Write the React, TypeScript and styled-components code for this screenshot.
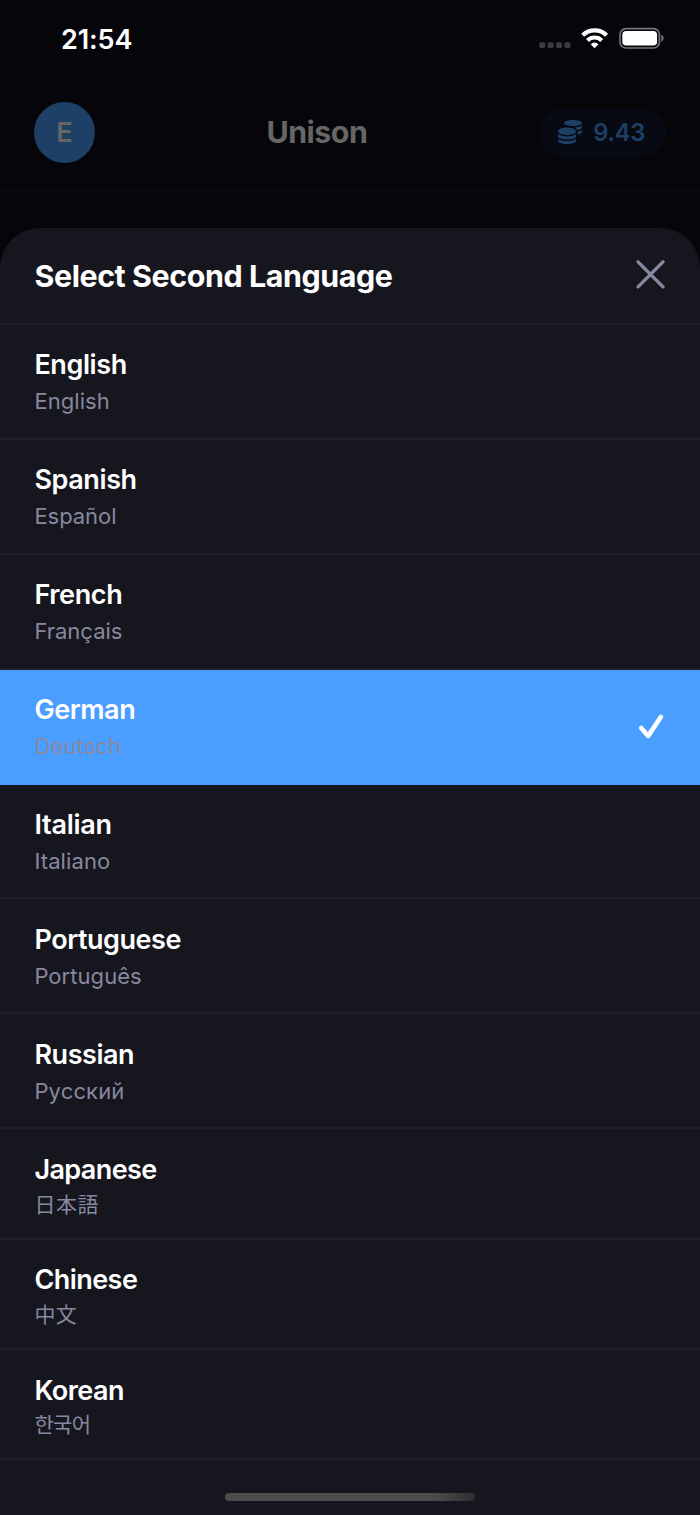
import React from "react";
import styled, { createGlobalStyle } from "styled-components";
import { FaCoins } from "react-icons/fa";

const Global = createGlobalStyle`
  *, *::before, *::after { box-sizing: border-box; }
  html, body { margin: 0; padding: 0; background: #05050a; }
  body {
    font-family: Inter, "Noto Sans CJK JP", "Noto Sans CJK KR", sans-serif;
    -webkit-font-smoothing: antialiased;
  }
`;

const Screen = styled.div`
  display: flex;
  flex-direction: column;
  width: 700px;
  height: 1515px;
  overflow: hidden;
  background: #05050a;
  position: relative;
`;

const StatusBar = styled.div`
  flex: none;
  display: flex;
  align-items: center;
  justify-content: space-between;
  height: 76px;
  padding: 0 36px 0 61px;
`;

const Clock = styled.div`
  padding-top: 3px;
  color: #fff;
  font-size: 27px;
  font-weight: 600;
  letter-spacing: -0.1px;
  line-height: 32px;
`;

const StatusIcons = styled.svg`
  display: block;
  width: 126px;
  height: 24px;
`;

const AppBar = styled.header`
  flex: none;
  display: flex;
  align-items: center;
  justify-content: space-between;
  height: 115px;
  padding: 0 34px 2px;
  border-bottom: 1px solid #0d0d14;
`;

const Avatar = styled.div`
  display: flex;
  align-items: center;
  justify-content: center;
  width: 61px;
  height: 61px;
  border-radius: 50%;
  background: #1e3f66;
  color: #666;
  font-size: 27px;
  font-weight: 600;
`;

const AppTitle = styled.h1`
  margin: 0;
  color: #666;
  font-size: 30.4px;
  font-weight: 650;
  letter-spacing: -0.5px;
`;

const Balance = styled.div`
  display: flex;
  align-items: center;
  gap: 11px;
  height: 49px;
  padding: 0 21px 0 19.5px;
  border-radius: 24px;
  background: #070a12;
  color: #1e3f66;
  font-size: 23.7px;
  font-weight: 600;
  letter-spacing: -0.3px;
`;

const Sheet = styled.section`
  flex: none;
  display: flex;
  flex-direction: column;
  height: 1287px;
  margin-top: 37px;
  border-radius: 40px 40px 0 0;
  background: #16161e;
`;

const SheetHeader = styled.div`
  flex: none;
  display: flex;
  align-items: center;
  justify-content: space-between;
  height: 97px;
  padding: 0 34px 0 34.5px;
  border-bottom: 2px solid #1e1e2c;
`;

const SheetTitle = styled.h2`
  margin: 0;
  color: #fff;
  font-size: 30.4px;
  font-weight: 660;
  letter-spacing: -0.42px;
  line-height: 36px;
`;

const CloseIcon = styled.svg`
  display: block;
  width: 30px;
  height: 30px;
  margin-bottom: 1px;
`;

const List = styled.div`
  display: flex;
  flex-direction: column;
`;

const Row = styled.div<{ $selected?: boolean; $compact?: boolean }>`
  flex: none;
  display: flex;
  align-items: center;
  justify-content: space-between;
  height: ${(p) => (p.$compact ? 110.4 : 114.9)}px;
  padding: 0 36px 0 34.4px;
  border-bottom: 2px solid ${(p) => (p.$selected ? "#4a9eff" : "#1e1e2c")};
  background: ${(p) => (p.$selected ? "#4a9eff" : "transparent")};
`;

const Labels = styled.div<{ $compact?: boolean }>`
  display: flex;
  flex-direction: column;
  padding-top: ${(p) => (p.$compact ? 4.5 : 0.9)}px;
`;

const Name = styled.div<{ $spacing: number }>`
  color: #fff;
  font-size: 27px;
  font-weight: 560;
  letter-spacing: ${(p) => p.$spacing}px;
  line-height: 33px;
`;

const Native = styled.div<{ $compact?: boolean; $spacing: number }>`
  margin-top: ${(p) => (p.$compact ? 3.7 : 6)}px;
  color: #8888a0;
  font-size: ${(p) => (p.$compact ? 21 : 22)}px;
  letter-spacing: ${(p) => p.$spacing}px;
  line-height: ${(p) => (p.$compact ? 29 : 28)}px;
`;

const CheckIcon = styled.svg`
  display: block;
  width: 26px;
  height: 26px;
`;

const HomeIndicator = styled.div`
  position: absolute;
  left: 225px;
  bottom: 14px;
  width: 250px;
  height: 8px;
  border-radius: 4px;
  background: linear-gradient(90deg, #4c4c4c 84%, #2e2e32 100%);
`;

type Language = {
  name: string;
  native: string;
  spacing: number;
  nativeSpacing: number;
  selected?: boolean;
  compact?: boolean;
};

const languages: Language[] = [
  { name: "English", native: "English", spacing: -0.4, nativeSpacing: 0.05 },
  { name: "Spanish", native: "Español", spacing: -0.4, nativeSpacing: -0.05 },
  { name: "French", native: "Français", spacing: -0.35, nativeSpacing: 0 },
  { name: "German", native: "Deutsch", spacing: -0.45, nativeSpacing: 0.15, selected: true },
  { name: "Italian", native: "Italiano", spacing: -0.25, nativeSpacing: 0.1 },
  { name: "Portuguese", native: "Português", spacing: -0.45, nativeSpacing: 0.05 },
  { name: "Russian", native: "Русский", spacing: -0.45, nativeSpacing: 0.15 },
  { name: "Japanese", native: "日本語", spacing: -0.6, nativeSpacing: 0.5, compact: true },
  { name: "Chinese", native: "中文", spacing: -0.55, nativeSpacing: 0.3, compact: true },
  { name: "Korean", native: "한국어", spacing: -0.5, nativeSpacing: -0.7, compact: true },
];

export default function App() {
  return (
    <Screen>
      <Global />
      <StatusBar>
        <Clock>21:54</Clock>
        <StatusIcons viewBox="538 26 126 24">
          <g fill="#3b3b3f">
            <rect x="539.2" y="42.2" width="6" height="6" rx="2" />
            <rect x="547.6" y="42.2" width="6" height="6" rx="2" />
            <rect x="556" y="42.2" width="6" height="6" rx="2" />
            <rect x="564.4" y="42.2" width="6" height="6" rx="2" />
          </g>
          <g fill="none" stroke="#fff" strokeWidth="4.2">
            <path d="M582.7 35.2a17.2 17.2 0 0 1 23.9 0" />
            <path d="M587.5 40.4a10.2 10.2 0 0 1 14.2 0" />
          </g>
          <path d="M590.7 44.2a5.6 5.6 0 0 1 7.8 0l-3.9 4z" fill="#fff" />
          <rect x="620" y="28.6" width="39.4" height="19.4" rx="6" fill="none" stroke="#77777a" strokeWidth="1.6" />
          <rect x="622.3" y="31" width="34.8" height="14.6" rx="3.8" fill="#fff" />
          <path d="M661.3 34.8c3 1.2 3 5.8 0 7z" fill="#77777a" />
        </StatusIcons>
      </StatusBar>
      <AppBar>
        <Avatar>E</Avatar>
        <AppTitle>Unison</AppTitle>
        <Balance>
          <FaCoins size={24} />
          9.43
        </Balance>
      </AppBar>
      <Sheet>
        <SheetHeader>
          <SheetTitle>Select Second Language</SheetTitle>
          <CloseIcon viewBox="0 0 30 30" fill="none" stroke="#8888a0" strokeWidth="3.3" strokeLinecap="round">
            <path d="M2 1.8l25 25M27 1.8l-25 25" />
          </CloseIcon>
        </SheetHeader>
        <List>
          {languages.map((l) => (
            <Row key={l.name} $selected={l.selected} $compact={l.compact}>
              <Labels $compact={l.compact}>
                <Name $spacing={l.spacing}>{l.name}</Name>
                <Native $spacing={l.nativeSpacing} $compact={l.compact}>{l.native}</Native>
              </Labels>
              {l.selected && (
                <CheckIcon viewBox="0 0 26 26" fill="none" stroke="#fff" strokeWidth="4.6" strokeLinecap="round" strokeLinejoin="round">
                  <path d="M3.2 14.9l7 8L22.8 4" />
                </CheckIcon>
              )}
            </Row>
          ))}
        </List>
      </Sheet>
      <HomeIndicator />
    </Screen>
  );
}
